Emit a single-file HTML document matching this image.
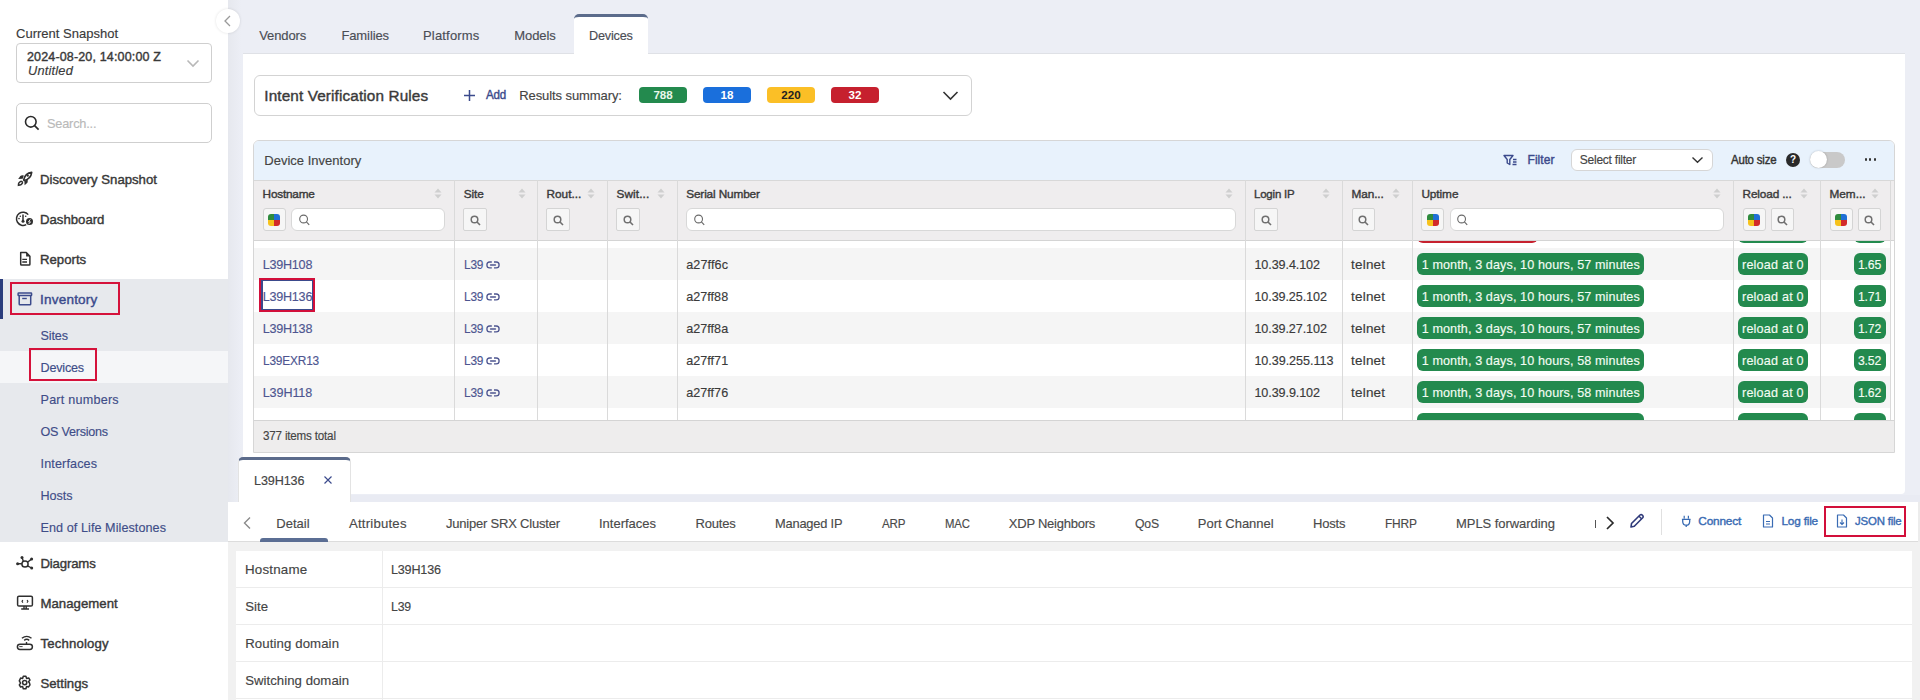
<!DOCTYPE html>
<html><head><meta charset="utf-8"><style>
html,body{margin:0;padding:0;width:1920px;height:700px;overflow:hidden;background:#fff}
body{position:relative;font-family:"Liberation Sans",sans-serif}
body>div,body>span,body>svg{position:absolute}
.t{white-space:nowrap;line-height:1}
</style></head><body>
<div style="left:0.00px;top:0.00px;width:228.00px;height:700.00px;background:#fff"></div>
<span class="t" style="left:16.00px;top:26.60px;font-size:13px;color:#3a3a3a;letter-spacing:0.007px;-webkit-text-stroke:0.15px #3a3a3a;">Current Snapshot</span>
<div style="left:16.00px;top:43.00px;width:196.00px;height:40.00px;border:1px solid #cfcfcf;border-radius:4px;box-sizing:border-box;background:#fff"></div>
<span class="t" style="left:27.00px;top:51.22px;font-size:12.5px;color:#393939;letter-spacing:0.152px;-webkit-text-stroke:0.4px #393939;">2024-08-20, 14:00:00 Z</span>
<span class="t" style="left:27.50px;top:65.22px;font-size:12.5px;color:#3a3a3a;font-style:italic;letter-spacing:0.200px;-webkit-text-stroke:0.15px #3a3a3a;transform:scaleX(1.0231);transform-origin:0 0;">Untitled</span>
<svg style="left:186px;top:59px;" width="14" height="9" viewBox="0 0 14 9"><path d="M1.5 1.5 L7 7 L12.5 1.5" fill="none" stroke="#b8b8b8" stroke-width="1.6"/></svg>
<div style="left:16.00px;top:103.00px;width:196.00px;height:40.00px;border:1px solid #cfcfcf;border-radius:5px;box-sizing:border-box;background:#fff"></div>
<svg style="left:24px;top:115px;" width="16" height="16" viewBox="0 0 16 16"><circle cx="6.8" cy="6.8" r="5.3" fill="none" stroke="#2a2a2a" stroke-width="1.6"/><path d="M10.6 10.6 L14.6 14.6" stroke="#2a2a2a" stroke-width="1.7"/></svg>
<span class="t" style="left:47.40px;top:116.50px;font-size:13px;color:#b9b9b9;letter-spacing:-0.200px;-webkit-text-stroke:0.15px #b9b9b9;transform:scaleX(0.9816);transform-origin:0 0;">Search...</span>
<svg style="left:14px;top:168px;" width="24" height="24" viewBox="0 0 24 24"><path d="M9.6 11.9 C10.6 7.6 13.6 4.9 17.7 4.4 C17.2 8.5 14.5 11.5 10.3 12.6 Z" fill="none" stroke="#2f2f2f" stroke-width="1.6" stroke-linejoin="round"/><circle cx="13.8" cy="7.7" r="1.1" fill="#2f2f2f"/><path d="M4.2 10.9 L6.3 7.9 Q7.6 7.1 9.9 7.5 L8.7 10.7 Z" fill="#2f2f2f"/><path d="M10.4 12.7 L13.7 11.4 Q14 13.3 13.4 14.7 L10.6 17.3 Z" fill="#2f2f2f"/><path d="M4.4 17.4 Q4.2 14.1 6.8 13.3 Q8.7 13.5 8.5 15.1 Q7.7 17.2 4.4 17.4 Z" fill="none" stroke="#2f2f2f" stroke-width="1.4"/></svg>
<svg style="left:14px;top:208px;" width="24" height="24" viewBox="0 0 24 24"><path d="M14.2 6.6 A6.6 6.6 0 1 0 12.2 16.6" fill="none" stroke="#2f2f2f" stroke-width="1.5"/><path d="M9 6.6 V12.8" stroke="#2f2f2f" stroke-width="1.5"/><circle cx="9" cy="13.3" r="1.5" fill="#2f2f2f"/><circle cx="6.3" cy="8.2" r="0.8" fill="#2f2f2f"/><circle cx="11.7" cy="8.2" r="0.8" fill="#2f2f2f"/><circle cx="5" cy="10.6" r="0.8" fill="#2f2f2f"/><circle cx="15.5" cy="13.6" r="3.5" fill="#2f2f2f"/><path d="M16.3 11.4 L14.5 13.9 H16.5 L14.7 16" fill="none" stroke="#fff" stroke-width="0.9"/></svg>
<svg style="left:14px;top:248px;" width="24" height="24" viewBox="0 0 24 24"><path d="M6.7 4.6 H12.3 L15.9 8.2 V16.3 Q15.9 17.1 15.1 17.1 H7.5 Q6.7 17.1 6.7 16.3 Z" fill="none" stroke="#2f2f2f" stroke-width="1.5" stroke-linejoin="round"/><path d="M12.1 4.6 V8.4 H15.9 Z" fill="#2f2f2f"/><path d="M8.3 11.4 H13 M8.3 14 H13" stroke="#2f2f2f" stroke-width="1.3"/></svg>
<span class="t" style="left:40.00px;top:172.83px;font-size:13.2px;color:#383838;letter-spacing:-0.022px;-webkit-text-stroke:0.4px #383838;">Discovery Snapshot</span>
<span class="t" style="left:40.00px;top:212.83px;font-size:13.2px;color:#383838;letter-spacing:-0.009px;-webkit-text-stroke:0.4px #383838;">Dashboard</span>
<span class="t" style="left:40.00px;top:252.83px;font-size:13.2px;color:#383838;letter-spacing:-0.003px;-webkit-text-stroke:0.4px #383838;">Reports</span>
<div style="left:0.00px;top:279.00px;width:228.00px;height:263.00px;background:#e7e9ed"></div>
<div style="left:0.00px;top:279.00px;width:3.00px;height:39.50px;background:#2b3d7d"></div>
<svg style="left:14px;top:288px;" width="24" height="24" viewBox="0 0 24 24"><rect x="4.1" y="5.1" width="13.5" height="2.4" rx="0.6" fill="none" stroke="#3b4a8c" stroke-width="1.5"/><path d="M5.2 7.5 V15.9 Q5.2 16.7 6 16.7 H15.9 Q16.7 16.7 16.7 15.9 V7.5" fill="none" stroke="#3b4a8c" stroke-width="1.5"/><path d="M8.2 10.5 H12.8" stroke="#3b4a8c" stroke-width="1.4"/></svg>
<span class="t" style="left:40.00px;top:292.83px;font-size:13.2px;color:#3b4a8c;letter-spacing:0.200px;-webkit-text-stroke:0.4px #3b4a8c;transform:scaleX(1.0268);transform-origin:0 0;">Inventory</span>
<div style="left:9.60px;top:282.30px;width:110.90px;height:33.20px;border:2px solid #d5123b;box-sizing:border-box"></div>
<div style="left:0.00px;top:351.00px;width:228.00px;height:31.50px;background:#f5f6f8"></div>
<span class="t" style="left:40.50px;top:329.93px;font-size:12.6px;color:#3f4d88;letter-spacing:-0.122px;-webkit-text-stroke:0.15px #3f4d88;">Sites</span>
<span class="t" style="left:40.50px;top:361.93px;font-size:12.6px;color:#3f4d88;letter-spacing:-0.202px;-webkit-text-stroke:0.15px #3f4d88;">Devices</span>
<span class="t" style="left:40.50px;top:393.93px;font-size:12.6px;color:#3f4d88;letter-spacing:0.231px;-webkit-text-stroke:0.15px #3f4d88;">Part numbers</span>
<span class="t" style="left:40.50px;top:425.93px;font-size:12.6px;color:#3f4d88;letter-spacing:-0.239px;-webkit-text-stroke:0.15px #3f4d88;">OS Versions</span>
<span class="t" style="left:40.50px;top:457.93px;font-size:12.6px;color:#3f4d88;letter-spacing:0.137px;-webkit-text-stroke:0.15px #3f4d88;">Interfaces</span>
<span class="t" style="left:40.50px;top:489.93px;font-size:12.6px;color:#3f4d88;letter-spacing:-0.022px;-webkit-text-stroke:0.15px #3f4d88;">Hosts</span>
<span class="t" style="left:40.50px;top:521.93px;font-size:12.6px;color:#3f4d88;letter-spacing:0.074px;-webkit-text-stroke:0.15px #3f4d88;">End of Life Milestones</span>
<div style="left:29.40px;top:348.40px;width:68.00px;height:33.00px;border:2px solid #d5123b;box-sizing:border-box"></div>
<svg style="left:12px;top:552px;" width="24" height="24" viewBox="0 0 24 24"><circle cx="13" cy="12" r="3.1" fill="none" stroke="#2f2f2f" stroke-width="1.5"/><path d="M5.5 11.8 H9.9 M10 5.3 L11.3 9.3 M19.5 7.1 L15.5 10.3 M19.6 16 L15.5 13.8" stroke="#2f2f2f" stroke-width="1.4"/><circle cx="5.6" cy="11.8" r="1.5" fill="#2f2f2f"/><circle cx="10" cy="5.4" r="1.5" fill="#2f2f2f"/><circle cx="19.6" cy="7.1" r="1.5" fill="#2f2f2f"/><circle cx="19.7" cy="16" r="1.5" fill="#2f2f2f"/></svg>
<svg style="left:12px;top:592px;" width="24" height="24" viewBox="0 0 24 24"><rect x="5.6" y="4.2" width="14.8" height="9.9" rx="1.4" fill="none" stroke="#2f2f2f" stroke-width="1.5"/><path d="M12 14.1 V16.6 M14.2 14.1 V16.6 M9.2 17 H17" stroke="#2f2f2f" stroke-width="1.4"/><path d="M10.9 8 L10 9.3 L10.9 10.6 M15 8 L15.9 9.3 L15 10.6" fill="none" stroke="#2f2f2f" stroke-width="1.1"/></svg>
<svg style="left:12px;top:632px;" width="24" height="24" viewBox="0 0 24 24"><rect x="5.4" y="12.2" width="15" height="5.2" rx="2.6" fill="none" stroke="#2f2f2f" stroke-width="1.5"/><path d="M7.3 14.6 H10.6" stroke="#2f2f2f" stroke-width="0.9"/><path d="M14.5 10 V12.2" stroke="#2f2f2f" stroke-width="1.4"/><path d="M9.9 6.3 Q14.7 2.5 19.5 6.3 M12.2 8.4 Q14.7 6.3 17.2 8.4" fill="none" stroke="#2f2f2f" stroke-width="1.4"/></svg>
<svg style="left:12px;top:672px;" width="24" height="24" viewBox="0 0 24 24"><path d="M11.3 4.3 H13.9 L14.6 6.4 L16.7 5.9 L18 8.1 L16.5 9.7 L17.4 10.8 L18 12.9 L16.6 14.9 L14.6 14.6 L13.9 16.8 H11.3 L10.6 14.6 L8.6 15 L7.3 12.9 L8.6 11.1 L7.3 8.8 L8.6 6.1 L10.6 6.4 Z" fill="none" stroke="#2f2f2f" stroke-width="1.5" stroke-linejoin="round"/><circle cx="12.7" cy="10.6" r="2.1" fill="none" stroke="#2f2f2f" stroke-width="1.5"/></svg>
<span class="t" style="left:40.40px;top:556.83px;font-size:13.2px;color:#383838;letter-spacing:-0.148px;-webkit-text-stroke:0.4px #383838;">Diagrams</span>
<span class="t" style="left:40.40px;top:596.83px;font-size:13.2px;color:#383838;letter-spacing:0.045px;-webkit-text-stroke:0.4px #383838;">Management</span>
<span class="t" style="left:40.40px;top:636.83px;font-size:13.2px;color:#383838;letter-spacing:0.172px;-webkit-text-stroke:0.4px #383838;">Technology</span>
<span class="t" style="left:40.40px;top:676.83px;font-size:13.2px;color:#383838;letter-spacing:0.013px;-webkit-text-stroke:0.4px #383838;">Settings</span>
<div style="left:228.00px;top:0.00px;width:1692.00px;height:700.00px;background:#eceef5"></div>
<div style="left:228.00px;top:0.00px;width:13.00px;height:700.00px;background:linear-gradient(90deg,#e6e8ee,#eceef5)"></div>
<div style="left:215.5px;top:8.5px;width:24px;height:24px;border-radius:50%;background:#fff;box-shadow:0 0 3px rgba(0,0,0,0.12)"></div>
<svg style="left:222px;top:14px;" width="12" height="14" viewBox="0 0 12 14"><path d="M8 2 L3 7 L8 12" fill="none" stroke="#9a9a9a" stroke-width="1.3"/></svg>
<div style="left:243.00px;top:53.00px;width:1662.00px;height:441.00px;background:#fff;border-top:1px solid #dfe1e6;box-sizing:border-box;border-radius:0 0 4px 4px"></div>
<div style="left:574.00px;top:14.00px;width:74.00px;height:40.50px;background:#fff;border-top:3px solid #5b6b8b;border-radius:5px 5px 0 0;box-sizing:border-box"></div>
<span class="t" style="left:259.20px;top:29.00px;font-size:13px;color:#4a4d55;letter-spacing:-0.101px;-webkit-text-stroke:0.15px #4a4d55;">Vendors</span>
<span class="t" style="left:341.40px;top:29.00px;font-size:13px;color:#4a4d55;letter-spacing:-0.100px;-webkit-text-stroke:0.15px #4a4d55;">Families</span>
<span class="t" style="left:423.00px;top:29.00px;font-size:13px;color:#4a4d55;letter-spacing:0.177px;-webkit-text-stroke:0.15px #4a4d55;">Platforms</span>
<span class="t" style="left:514.30px;top:29.00px;font-size:13px;color:#4a4d55;letter-spacing:-0.101px;-webkit-text-stroke:0.15px #4a4d55;">Models</span>
<span class="t" style="left:589.30px;top:29.00px;font-size:13px;color:#4a4d55;letter-spacing:-0.200px;-webkit-text-stroke:0.15px #4a4d55;transform:scaleX(0.9746);transform-origin:0 0;">Devices</span>
<div style="left:253.50px;top:74.50px;width:718.00px;height:41.00px;border:1px solid #d3d3d3;border-radius:6px;box-sizing:border-box"></div>
<span class="t" style="left:264.30px;top:87.65px;font-size:15.3px;color:#3a3a3a;letter-spacing:0.130px;-webkit-text-stroke:0.4px #3a3a3a;">Intent Verification Rules</span>
<svg style="left:463px;top:89px;" width="13" height="13" viewBox="0 0 13 13"><path d="M6.5 1 V12 M1 6.5 H12" stroke="#3b4a8c" stroke-width="1.5"/></svg>
<span class="t" style="left:486.30px;top:88.64px;font-size:12px;color:#3b4a8c;letter-spacing:-0.200px;-webkit-text-stroke:0.4px #3b4a8c;transform:scaleX(0.9637);transform-origin:0 0;">Add</span>
<span class="t" style="left:519.20px;top:88.80px;font-size:13px;color:#444;letter-spacing:-0.083px;-webkit-text-stroke:0.15px #444;">Results summary:</span>
<div style="left:639.2px;top:87.2px;width:47.799999999999955px;height:15.6px;background:#238a4e;border-radius:4px;color:#e9f7ea;font-size:11.6px;font-weight:bold;text-align:center;line-height:16.6px">788</div>
<div style="left:703px;top:87.2px;width:48px;height:15.6px;background:#1a6fdc;border-radius:4px;color:#fff;font-size:11.6px;font-weight:bold;text-align:center;line-height:16.6px">18</div>
<div style="left:767px;top:87.2px;width:48px;height:15.6px;background:#fbbf26;border-radius:4px;color:#222;font-size:11.6px;font-weight:bold;text-align:center;line-height:16.6px">220</div>
<div style="left:831px;top:87.2px;width:48px;height:15.6px;background:#c6202e;border-radius:4px;color:#fff;font-size:11.6px;font-weight:bold;text-align:center;line-height:16.6px">32</div>
<svg style="left:942px;top:90px;" width="17" height="11" viewBox="0 0 17 11"><path d="M1.5 2 L8.5 9 L15.5 2" fill="none" stroke="#333" stroke-width="1.6"/></svg>
<div style="left:253.00px;top:140.00px;width:1642.00px;height:312.50px;border:1px solid #d6d6d6;border-radius:6px 6px 0 0;box-sizing:border-box;background:#fff"></div>
<div style="left:254.00px;top:141.00px;width:1640.00px;height:38.50px;background:#e8f2fc;border-radius:5px 5px 0 0"></div>
<span class="t" style="left:264.30px;top:154.20px;font-size:13px;color:#444;letter-spacing:0.011px;-webkit-text-stroke:0.15px #444;">Device Inventory</span>
<svg style="left:1503px;top:154px;" width="15" height="12" viewBox="0 0 15 12"><path d="M1 1.5 H10 L6.8 5.5 V10.5 L4.2 9 V5.5 Z" fill="none" stroke="#3b4a8c" stroke-width="1.4" stroke-linejoin="round"/><path d="M10 5.5 H13.5 M10 8 H13.5 M9.5 10.5 H13.5" stroke="#3b4a8c" stroke-width="1.3"/></svg>
<span class="t" style="left:1527.50px;top:153.59px;font-size:12px;color:#3b4a8c;letter-spacing:0.055px;-webkit-text-stroke:0.4px #3b4a8c;">Filter</span>
<div style="left:1570.60px;top:148.50px;width:142.40px;height:22.80px;background:#fff;border:1px solid #d6d6d6;border-radius:6px;box-sizing:border-box"></div>
<span class="t" style="left:1579.75px;top:153.84px;font-size:12px;color:#444;letter-spacing:-0.235px;-webkit-text-stroke:0.15px #444;">Select filter</span>
<svg style="left:1691px;top:156px;" width="13" height="8" viewBox="0 0 13 8"><path d="M1.5 1.5 L6.5 6.2 L11.5 1.5" fill="none" stroke="#333" stroke-width="1.4"/></svg>
<span class="t" style="left:1730.60px;top:153.84px;font-size:12px;color:#333;letter-spacing:-0.200px;-webkit-text-stroke:0.4px #333;transform:scaleX(0.9546);transform-origin:0 0;">Auto size</span>
<div style="left:1786px;top:153px;width:14px;height:14px;border-radius:50%;background:#2a2a2a;color:#fff;font-size:10px;font-weight:bold;text-align:center;line-height:14px">?</div>
<div style="left:1810.30px;top:151.50px;width:35.20px;height:16.80px;background:#c9c9c9;border-radius:9px"></div>
<div style="left:1810.3px;top:151.3px;width:17px;height:17px;border-radius:50%;background:#fff;box-shadow:0 0 2px rgba(0,0,0,0.25)"></div>
<div style="left:1864.5px;top:158.4px;width:2.2px;height:2.2px;border-radius:50%;background:#333"></div>
<div style="left:1869px;top:158.4px;width:2.2px;height:2.2px;border-radius:50%;background:#333"></div>
<div style="left:1873.5px;top:158.4px;width:2.2px;height:2.2px;border-radius:50%;background:#333"></div>
<div style="left:254.00px;top:248.00px;width:1636.50px;height:32.00px;background:#f5f5f5"></div>
<div style="left:254.00px;top:312.00px;width:1636.50px;height:32.00px;background:#f5f5f5"></div>
<div style="left:254.00px;top:376.00px;width:1636.50px;height:32.00px;background:#f5f5f5"></div>
<div style="left:1417.00px;top:221.00px;width:120.50px;height:22.00px;background:#c6202e;border-radius:6px"></div>
<div style="left:1738.00px;top:221.00px;width:70.00px;height:22.00px;background:#238a4e;border-radius:6px"></div>
<div style="left:1854.20px;top:221.00px;width:31.80px;height:22.00px;background:#238a4e;border-radius:6px"></div>
<div style="left:1417.00px;top:413.00px;width:227.30px;height:22.00px;background:#238a4e;border-radius:6px"></div>
<div style="left:1738.00px;top:413.00px;width:70.00px;height:22.00px;background:#238a4e;border-radius:6px"></div>
<div style="left:1854.20px;top:413.00px;width:31.80px;height:22.00px;background:#238a4e;border-radius:6px"></div>
<div style="left:254.00px;top:419.50px;width:1640.00px;height:32.00px;background:#eeeded;border-top:1px solid #d4d4d4;box-sizing:border-box"></div>
<span class="t" style="left:262.50px;top:429.92px;font-size:12.5px;color:#444;letter-spacing:-0.200px;-webkit-text-stroke:0.15px #444;transform:scaleX(0.9298);transform-origin:0 0;">377 items total</span>
<div style="left:254.00px;top:179.50px;width:1640.00px;height:61.00px;background:#efedee;border-top:1px solid #d8d8d8;border-bottom:1px solid #d4d4d4;box-sizing:border-box"></div>
<div style="left:454.00px;top:179.50px;width:1.00px;height:240.00px;background:#dadada"></div>
<div style="left:537.00px;top:179.50px;width:1.00px;height:240.00px;background:#dadada"></div>
<div style="left:607.00px;top:179.50px;width:1.00px;height:240.00px;background:#dadada"></div>
<div style="left:677.00px;top:179.50px;width:1.00px;height:240.00px;background:#dadada"></div>
<div style="left:1245.00px;top:179.50px;width:1.00px;height:240.00px;background:#dadada"></div>
<div style="left:1342.00px;top:179.50px;width:1.00px;height:240.00px;background:#dadada"></div>
<div style="left:1412.00px;top:179.50px;width:1.00px;height:240.00px;background:#dadada"></div>
<div style="left:1733.00px;top:179.50px;width:1.00px;height:240.00px;background:#dadada"></div>
<div style="left:1820.00px;top:179.50px;width:1.00px;height:240.00px;background:#dadada"></div>
<div style="left:1890.00px;top:179.50px;width:1.00px;height:240.00px;background:#dadada"></div>
<span class="t" style="left:262.60px;top:188.81px;font-size:11.8px;color:#3a3a3a;letter-spacing:-0.223px;-webkit-text-stroke:0.4px #3a3a3a;">Hostname</span>
<svg style="left:434px;top:188px;" width="8" height="11" viewBox="0 0 8 11"><path d="M4 0.5 L7.5 4.5 H0.5 Z M4 10.5 L7.5 6.5 H0.5 Z" fill="#cfcfcf"/></svg>
<span class="t" style="left:463.70px;top:188.81px;font-size:11.8px;color:#3a3a3a;letter-spacing:-0.083px;-webkit-text-stroke:0.4px #3a3a3a;">Site</span>
<svg style="left:517.5px;top:188px;" width="8" height="11" viewBox="0 0 8 11"><path d="M4 0.5 L7.5 4.5 H0.5 Z M4 10.5 L7.5 6.5 H0.5 Z" fill="#cfcfcf"/></svg>
<span class="t" style="left:546.40px;top:188.81px;font-size:11.8px;color:#3a3a3a;letter-spacing:0.034px;-webkit-text-stroke:0.4px #3a3a3a;">Rout...</span>
<svg style="left:587px;top:188px;" width="8" height="11" viewBox="0 0 8 11"><path d="M4 0.5 L7.5 4.5 H0.5 Z M4 10.5 L7.5 6.5 H0.5 Z" fill="#cfcfcf"/></svg>
<span class="t" style="left:616.40px;top:188.81px;font-size:11.8px;color:#3a3a3a;letter-spacing:0.125px;-webkit-text-stroke:0.4px #3a3a3a;">Swit...</span>
<svg style="left:656.5px;top:188px;" width="8" height="11" viewBox="0 0 8 11"><path d="M4 0.5 L7.5 4.5 H0.5 Z M4 10.5 L7.5 6.5 H0.5 Z" fill="#cfcfcf"/></svg>
<span class="t" style="left:686.20px;top:188.81px;font-size:11.8px;color:#3a3a3a;letter-spacing:-0.140px;-webkit-text-stroke:0.4px #3a3a3a;">Serial Number</span>
<svg style="left:1225px;top:188px;" width="8" height="11" viewBox="0 0 8 11"><path d="M4 0.5 L7.5 4.5 H0.5 Z M4 10.5 L7.5 6.5 H0.5 Z" fill="#cfcfcf"/></svg>
<span class="t" style="left:1254.40px;top:188.81px;font-size:11.8px;color:#3a3a3a;letter-spacing:-0.200px;-webkit-text-stroke:0.4px #3a3a3a;transform:scaleX(0.9712);transform-origin:0 0;">Login IP</span>
<svg style="left:1322px;top:188px;" width="8" height="11" viewBox="0 0 8 11"><path d="M4 0.5 L7.5 4.5 H0.5 Z M4 10.5 L7.5 6.5 H0.5 Z" fill="#cfcfcf"/></svg>
<span class="t" style="left:1351.60px;top:188.81px;font-size:11.8px;color:#3a3a3a;letter-spacing:-0.132px;-webkit-text-stroke:0.4px #3a3a3a;">Man...</span>
<svg style="left:1392.3px;top:188px;" width="8" height="11" viewBox="0 0 8 11"><path d="M4 0.5 L7.5 4.5 H0.5 Z M4 10.5 L7.5 6.5 H0.5 Z" fill="#cfcfcf"/></svg>
<span class="t" style="left:1421.40px;top:188.81px;font-size:11.8px;color:#3a3a3a;letter-spacing:-0.063px;-webkit-text-stroke:0.4px #3a3a3a;">Uptime</span>
<svg style="left:1712.5px;top:188px;" width="8" height="11" viewBox="0 0 8 11"><path d="M4 0.5 L7.5 4.5 H0.5 Z M4 10.5 L7.5 6.5 H0.5 Z" fill="#cfcfcf"/></svg>
<span class="t" style="left:1742.60px;top:188.81px;font-size:11.8px;color:#3a3a3a;letter-spacing:-0.151px;-webkit-text-stroke:0.4px #3a3a3a;">Reload ...</span>
<svg style="left:1800px;top:188px;" width="8" height="11" viewBox="0 0 8 11"><path d="M4 0.5 L7.5 4.5 H0.5 Z M4 10.5 L7.5 6.5 H0.5 Z" fill="#cfcfcf"/></svg>
<span class="t" style="left:1829.50px;top:188.81px;font-size:11.8px;color:#3a3a3a;letter-spacing:-0.010px;-webkit-text-stroke:0.4px #3a3a3a;">Mem...</span>
<svg style="left:1870.5px;top:188px;" width="8" height="11" viewBox="0 0 8 11"><path d="M4 0.5 L7.5 4.5 H0.5 Z M4 10.5 L7.5 6.5 H0.5 Z" fill="#cfcfcf"/></svg>
<div style="left:262.6px;top:208.3px;width:23px;height:23.2px;background:#f6f6f6;border:1px solid #d4d4d4;border-radius:3px;box-sizing:border-box"></div>
<svg style="left:267.90000000000003px;top:213.8px;" width="12" height="12" viewBox="0 0 12 12"><path d="M0 3 Q0 0 3 0 H6 V6 H0 Z" fill="#2e8b3d"/><path d="M6 0 H9 Q12 0 12 3 V6 H6 Z" fill="#1f6fd6"/><path d="M0 6 H6 V12 H3 Q0 12 0 9 Z" fill="#f6c21c"/><path d="M6 6 H12 V9 Q12 12 9 12 H6 Z" fill="#d22a2a"/></svg>
<div style="left:291px;top:208.3px;width:153.8px;height:23.2px;background:#fff;border:1px solid #d8d8d8;border-radius:6px;box-sizing:border-box"></div>
<svg style="left:298.5px;top:213.8px;" width="12" height="12" viewBox="0 0 12 12"><circle cx="4.6" cy="5" r="3.9" fill="none" stroke="#6a6a6a" stroke-width="1.1"/><path d="M7.4 7.9 L10.2 10.8" stroke="#6a6a6a" stroke-width="1.2"/></svg>
<div style="left:463.3px;top:208.3px;width:23.3px;height:23.2px;background:#f6f6f6;border:1px solid #d4d4d4;border-radius:2px;box-sizing:border-box"></div>
<svg style="left:469.8px;top:214.5px;" width="11" height="11" viewBox="0 0 11 11"><circle cx="4.5" cy="4.5" r="3.3" fill="none" stroke="#707070" stroke-width="1.5"/><path d="M7 7 L10 10" stroke="#707070" stroke-width="1.6"/></svg>
<div style="left:546.4px;top:208.3px;width:23.3px;height:23.2px;background:#f6f6f6;border:1px solid #d4d4d4;border-radius:2px;box-sizing:border-box"></div>
<svg style="left:552.9px;top:214.5px;" width="11" height="11" viewBox="0 0 11 11"><circle cx="4.5" cy="4.5" r="3.3" fill="none" stroke="#707070" stroke-width="1.5"/><path d="M7 7 L10 10" stroke="#707070" stroke-width="1.6"/></svg>
<div style="left:616.4px;top:208.3px;width:23.3px;height:23.2px;background:#f6f6f6;border:1px solid #d4d4d4;border-radius:2px;box-sizing:border-box"></div>
<svg style="left:622.9px;top:214.5px;" width="11" height="11" viewBox="0 0 11 11"><circle cx="4.5" cy="4.5" r="3.3" fill="none" stroke="#707070" stroke-width="1.5"/><path d="M7 7 L10 10" stroke="#707070" stroke-width="1.6"/></svg>
<div style="left:686.2px;top:208.3px;width:550.0999999999999px;height:23.2px;background:#fff;border:1px solid #d8d8d8;border-radius:6px;box-sizing:border-box"></div>
<svg style="left:693.7px;top:213.8px;" width="12" height="12" viewBox="0 0 12 12"><circle cx="4.6" cy="5" r="3.9" fill="none" stroke="#6a6a6a" stroke-width="1.1"/><path d="M7.4 7.9 L10.2 10.8" stroke="#6a6a6a" stroke-width="1.2"/></svg>
<div style="left:1254.4px;top:208.3px;width:23.3px;height:23.2px;background:#f6f6f6;border:1px solid #d4d4d4;border-radius:2px;box-sizing:border-box"></div>
<svg style="left:1260.9px;top:214.5px;" width="11" height="11" viewBox="0 0 11 11"><circle cx="4.5" cy="4.5" r="3.3" fill="none" stroke="#707070" stroke-width="1.5"/><path d="M7 7 L10 10" stroke="#707070" stroke-width="1.6"/></svg>
<div style="left:1351.6px;top:208.3px;width:23.3px;height:23.2px;background:#f6f6f6;border:1px solid #d4d4d4;border-radius:2px;box-sizing:border-box"></div>
<svg style="left:1358.1px;top:214.5px;" width="11" height="11" viewBox="0 0 11 11"><circle cx="4.5" cy="4.5" r="3.3" fill="none" stroke="#707070" stroke-width="1.5"/><path d="M7 7 L10 10" stroke="#707070" stroke-width="1.6"/></svg>
<div style="left:1421.4px;top:208.3px;width:23px;height:23.2px;background:#f6f6f6;border:1px solid #d4d4d4;border-radius:3px;box-sizing:border-box"></div>
<svg style="left:1426.7px;top:213.8px;" width="12" height="12" viewBox="0 0 12 12"><path d="M0 3 Q0 0 3 0 H6 V6 H0 Z" fill="#2e8b3d"/><path d="M6 0 H9 Q12 0 12 3 V6 H6 Z" fill="#1f6fd6"/><path d="M0 6 H6 V12 H3 Q0 12 0 9 Z" fill="#f6c21c"/><path d="M6 6 H12 V9 Q12 12 9 12 H6 Z" fill="#d22a2a"/></svg>
<div style="left:1449.8px;top:208.3px;width:274.20000000000005px;height:23.2px;background:#fff;border:1px solid #d8d8d8;border-radius:6px;box-sizing:border-box"></div>
<svg style="left:1457.3px;top:213.8px;" width="12" height="12" viewBox="0 0 12 12"><circle cx="4.6" cy="5" r="3.9" fill="none" stroke="#6a6a6a" stroke-width="1.1"/><path d="M7.4 7.9 L10.2 10.8" stroke="#6a6a6a" stroke-width="1.2"/></svg>
<div style="left:1742.6px;top:208.3px;width:23px;height:23.2px;background:#f6f6f6;border:1px solid #d4d4d4;border-radius:3px;box-sizing:border-box"></div>
<svg style="left:1747.8999999999999px;top:213.8px;" width="12" height="12" viewBox="0 0 12 12"><path d="M0 3 Q0 0 3 0 H6 V6 H0 Z" fill="#2e8b3d"/><path d="M6 0 H9 Q12 0 12 3 V6 H6 Z" fill="#1f6fd6"/><path d="M0 6 H6 V12 H3 Q0 12 0 9 Z" fill="#f6c21c"/><path d="M6 6 H12 V9 Q12 12 9 12 H6 Z" fill="#d22a2a"/></svg>
<div style="left:1770.5px;top:208.3px;width:23.3px;height:23.2px;background:#f6f6f6;border:1px solid #d4d4d4;border-radius:2px;box-sizing:border-box"></div>
<svg style="left:1777.0px;top:214.5px;" width="11" height="11" viewBox="0 0 11 11"><circle cx="4.5" cy="4.5" r="3.3" fill="none" stroke="#707070" stroke-width="1.5"/><path d="M7 7 L10 10" stroke="#707070" stroke-width="1.6"/></svg>
<div style="left:1829.5px;top:208.3px;width:23px;height:23.2px;background:#f6f6f6;border:1px solid #d4d4d4;border-radius:3px;box-sizing:border-box"></div>
<svg style="left:1834.8px;top:213.8px;" width="12" height="12" viewBox="0 0 12 12"><path d="M0 3 Q0 0 3 0 H6 V6 H0 Z" fill="#2e8b3d"/><path d="M6 0 H9 Q12 0 12 3 V6 H6 Z" fill="#1f6fd6"/><path d="M0 6 H6 V12 H3 Q0 12 0 9 Z" fill="#f6c21c"/><path d="M6 6 H12 V9 Q12 12 9 12 H6 Z" fill="#d22a2a"/></svg>
<div style="left:1857.6px;top:208.3px;width:23.3px;height:23.2px;background:#f6f6f6;border:1px solid #d4d4d4;border-radius:2px;box-sizing:border-box"></div>
<svg style="left:1864.1px;top:214.5px;" width="11" height="11" viewBox="0 0 11 11"><circle cx="4.5" cy="4.5" r="3.3" fill="none" stroke="#707070" stroke-width="1.5"/><path d="M7 7 L10 10" stroke="#707070" stroke-width="1.6"/></svg>
<span class="t" style="left:262.70px;top:258.93px;font-size:12.6px;color:#4d5590;letter-spacing:-0.235px;-webkit-text-stroke:0.15px #4d5590;">L39H108</span>
<span class="t" style="left:463.50px;top:258.93px;font-size:12.6px;color:#4d5590;letter-spacing:-0.200px;-webkit-text-stroke:0.15px #4d5590;transform:scaleX(0.9450);transform-origin:0 0;">L39</span>
<svg style="left:486px;top:259px;" width="14" height="10" viewBox="0 0 14 10"><path d="M5.8 3 H3.6 Q0.9 3 0.9 5.9 Q0.9 8.8 3.6 8.8 H5.8 M8 3 H10.2 Q13.1 3 13.1 5.9 Q13.1 8.8 10.2 8.8 H8" fill="none" stroke="#4d5590" stroke-width="1.3"/><path d="M4.6 5.9 H9.4" stroke="#4d5590" stroke-width="1.5" stroke-linecap="round"/></svg>
<span class="t" style="left:686.20px;top:258.93px;font-size:12.6px;color:#3a3a3a;letter-spacing:0.128px;-webkit-text-stroke:0.15px #3a3a3a;">a27ff6c</span>
<span class="t" style="left:1254.40px;top:258.93px;font-size:12.6px;color:#3a3a3a;letter-spacing:-0.088px;-webkit-text-stroke:0.15px #3a3a3a;">10.39.4.102</span>
<span class="t" style="left:1351.20px;top:258.93px;font-size:12.6px;color:#3a3a3a;letter-spacing:0.200px;-webkit-text-stroke:0.15px #3a3a3a;transform:scaleX(1.0711);transform-origin:0 0;">telnet</span>
<div style="left:1417.00px;top:253.00px;width:227.30px;height:22.00px;background:#238a4e;border-radius:6px"></div>
<span class="t" style="left:1421.70px;top:258.93px;font-size:12.6px;color:#f3fcf3;letter-spacing:0.107px;-webkit-text-stroke:0.15px #f3fcf3;">1 month, 3 days, 10 hours, 57 minutes</span>
<div style="left:1738.00px;top:253.00px;width:70.00px;height:22.00px;background:#238a4e;border-radius:6px"></div>
<span class="t" style="left:1742.00px;top:258.93px;font-size:12.6px;color:#f3fcf3;letter-spacing:0.205px;-webkit-text-stroke:0.15px #f3fcf3;">reload at 0</span>
<div style="left:1854.20px;top:253.00px;width:31.80px;height:22.00px;background:#238a4e;border-radius:6px"></div>
<span class="t" style="left:1858.40px;top:258.93px;font-size:12.6px;color:#f3fcf3;letter-spacing:-0.200px;-webkit-text-stroke:0.15px #f3fcf3;transform:scaleX(0.9695);transform-origin:0 0;">1.65</span>
<span class="t" style="left:262.70px;top:290.93px;font-size:12.6px;color:#4d5590;letter-spacing:-0.235px;-webkit-text-stroke:0.15px #4d5590;">L39H136</span>
<span class="t" style="left:463.50px;top:290.93px;font-size:12.6px;color:#4d5590;letter-spacing:-0.200px;-webkit-text-stroke:0.15px #4d5590;transform:scaleX(0.9450);transform-origin:0 0;">L39</span>
<svg style="left:486px;top:291px;" width="14" height="10" viewBox="0 0 14 10"><path d="M5.8 3 H3.6 Q0.9 3 0.9 5.9 Q0.9 8.8 3.6 8.8 H5.8 M8 3 H10.2 Q13.1 3 13.1 5.9 Q13.1 8.8 10.2 8.8 H8" fill="none" stroke="#4d5590" stroke-width="1.3"/><path d="M4.6 5.9 H9.4" stroke="#4d5590" stroke-width="1.5" stroke-linecap="round"/></svg>
<span class="t" style="left:686.20px;top:290.93px;font-size:12.6px;color:#3a3a3a;letter-spacing:0.027px;-webkit-text-stroke:0.15px #3a3a3a;">a27ff88</span>
<span class="t" style="left:1254.40px;top:290.93px;font-size:12.6px;color:#3a3a3a;letter-spacing:-0.089px;-webkit-text-stroke:0.15px #3a3a3a;">10.39.25.102</span>
<span class="t" style="left:1351.20px;top:290.93px;font-size:12.6px;color:#3a3a3a;letter-spacing:0.200px;-webkit-text-stroke:0.15px #3a3a3a;transform:scaleX(1.0711);transform-origin:0 0;">telnet</span>
<div style="left:1417.00px;top:285.00px;width:227.30px;height:22.00px;background:#238a4e;border-radius:6px"></div>
<span class="t" style="left:1421.70px;top:290.93px;font-size:12.6px;color:#f3fcf3;letter-spacing:0.107px;-webkit-text-stroke:0.15px #f3fcf3;">1 month, 3 days, 10 hours, 57 minutes</span>
<div style="left:1738.00px;top:285.00px;width:70.00px;height:22.00px;background:#238a4e;border-radius:6px"></div>
<span class="t" style="left:1742.00px;top:290.93px;font-size:12.6px;color:#f3fcf3;letter-spacing:0.205px;-webkit-text-stroke:0.15px #f3fcf3;">reload at 0</span>
<div style="left:1854.20px;top:285.00px;width:31.80px;height:22.00px;background:#238a4e;border-radius:6px"></div>
<span class="t" style="left:1858.40px;top:290.93px;font-size:12.6px;color:#f3fcf3;letter-spacing:-0.200px;-webkit-text-stroke:0.15px #f3fcf3;transform:scaleX(0.9695);transform-origin:0 0;">1.71</span>
<span class="t" style="left:262.70px;top:322.93px;font-size:12.6px;color:#4d5590;letter-spacing:-0.235px;-webkit-text-stroke:0.15px #4d5590;">L39H138</span>
<span class="t" style="left:463.50px;top:322.93px;font-size:12.6px;color:#4d5590;letter-spacing:-0.200px;-webkit-text-stroke:0.15px #4d5590;transform:scaleX(0.9450);transform-origin:0 0;">L39</span>
<svg style="left:486px;top:323px;" width="14" height="10" viewBox="0 0 14 10"><path d="M5.8 3 H3.6 Q0.9 3 0.9 5.9 Q0.9 8.8 3.6 8.8 H5.8 M8 3 H10.2 Q13.1 3 13.1 5.9 Q13.1 8.8 10.2 8.8 H8" fill="none" stroke="#4d5590" stroke-width="1.3"/><path d="M4.6 5.9 H9.4" stroke="#4d5590" stroke-width="1.5" stroke-linecap="round"/></svg>
<span class="t" style="left:686.20px;top:322.93px;font-size:12.6px;color:#3a3a3a;letter-spacing:0.027px;-webkit-text-stroke:0.15px #3a3a3a;">a27ff8a</span>
<span class="t" style="left:1254.40px;top:322.93px;font-size:12.6px;color:#3a3a3a;letter-spacing:-0.089px;-webkit-text-stroke:0.15px #3a3a3a;">10.39.27.102</span>
<span class="t" style="left:1351.20px;top:322.93px;font-size:12.6px;color:#3a3a3a;letter-spacing:0.200px;-webkit-text-stroke:0.15px #3a3a3a;transform:scaleX(1.0711);transform-origin:0 0;">telnet</span>
<div style="left:1417.00px;top:317.00px;width:227.30px;height:22.00px;background:#238a4e;border-radius:6px"></div>
<span class="t" style="left:1421.70px;top:322.93px;font-size:12.6px;color:#f3fcf3;letter-spacing:0.107px;-webkit-text-stroke:0.15px #f3fcf3;">1 month, 3 days, 10 hours, 57 minutes</span>
<div style="left:1738.00px;top:317.00px;width:70.00px;height:22.00px;background:#238a4e;border-radius:6px"></div>
<span class="t" style="left:1742.00px;top:322.93px;font-size:12.6px;color:#f3fcf3;letter-spacing:0.205px;-webkit-text-stroke:0.15px #f3fcf3;">reload at 0</span>
<div style="left:1854.20px;top:317.00px;width:31.80px;height:22.00px;background:#238a4e;border-radius:6px"></div>
<span class="t" style="left:1858.40px;top:322.93px;font-size:12.6px;color:#f3fcf3;letter-spacing:-0.200px;-webkit-text-stroke:0.15px #f3fcf3;transform:scaleX(0.9695);transform-origin:0 0;">1.72</span>
<span class="t" style="left:262.70px;top:354.93px;font-size:12.6px;color:#4d5590;letter-spacing:-0.200px;-webkit-text-stroke:0.15px #4d5590;transform:scaleX(0.9436);transform-origin:0 0;">L39EXR13</span>
<span class="t" style="left:463.50px;top:354.93px;font-size:12.6px;color:#4d5590;letter-spacing:-0.200px;-webkit-text-stroke:0.15px #4d5590;transform:scaleX(0.9450);transform-origin:0 0;">L39</span>
<svg style="left:486px;top:355px;" width="14" height="10" viewBox="0 0 14 10"><path d="M5.8 3 H3.6 Q0.9 3 0.9 5.9 Q0.9 8.8 3.6 8.8 H5.8 M8 3 H10.2 Q13.1 3 13.1 5.9 Q13.1 8.8 10.2 8.8 H8" fill="none" stroke="#4d5590" stroke-width="1.3"/><path d="M4.6 5.9 H9.4" stroke="#4d5590" stroke-width="1.5" stroke-linecap="round"/></svg>
<span class="t" style="left:686.20px;top:354.93px;font-size:12.6px;color:#3a3a3a;letter-spacing:0.027px;-webkit-text-stroke:0.15px #3a3a3a;">a27ff71</span>
<span class="t" style="left:1254.40px;top:354.93px;font-size:12.6px;color:#3a3a3a;letter-spacing:-0.050px;-webkit-text-stroke:0.15px #3a3a3a;">10.39.255.113</span>
<span class="t" style="left:1351.20px;top:354.93px;font-size:12.6px;color:#3a3a3a;letter-spacing:0.200px;-webkit-text-stroke:0.15px #3a3a3a;transform:scaleX(1.0711);transform-origin:0 0;">telnet</span>
<div style="left:1417.00px;top:349.00px;width:227.30px;height:22.00px;background:#238a4e;border-radius:6px"></div>
<span class="t" style="left:1421.70px;top:354.93px;font-size:12.6px;color:#f3fcf3;letter-spacing:0.107px;-webkit-text-stroke:0.15px #f3fcf3;">1 month, 3 days, 10 hours, 58 minutes</span>
<div style="left:1738.00px;top:349.00px;width:70.00px;height:22.00px;background:#238a4e;border-radius:6px"></div>
<span class="t" style="left:1742.00px;top:354.93px;font-size:12.6px;color:#f3fcf3;letter-spacing:0.205px;-webkit-text-stroke:0.15px #f3fcf3;">reload at 0</span>
<div style="left:1854.20px;top:349.00px;width:31.80px;height:22.00px;background:#238a4e;border-radius:6px"></div>
<span class="t" style="left:1858.40px;top:354.93px;font-size:12.6px;color:#f3fcf3;letter-spacing:-0.200px;-webkit-text-stroke:0.15px #f3fcf3;transform:scaleX(0.9695);transform-origin:0 0;">3.52</span>
<span class="t" style="left:262.70px;top:386.93px;font-size:12.6px;color:#4d5590;letter-spacing:-0.102px;-webkit-text-stroke:0.15px #4d5590;">L39H118</span>
<span class="t" style="left:463.50px;top:386.93px;font-size:12.6px;color:#4d5590;letter-spacing:-0.200px;-webkit-text-stroke:0.15px #4d5590;transform:scaleX(0.9450);transform-origin:0 0;">L39</span>
<svg style="left:486px;top:387px;" width="14" height="10" viewBox="0 0 14 10"><path d="M5.8 3 H3.6 Q0.9 3 0.9 5.9 Q0.9 8.8 3.6 8.8 H5.8 M8 3 H10.2 Q13.1 3 13.1 5.9 Q13.1 8.8 10.2 8.8 H8" fill="none" stroke="#4d5590" stroke-width="1.3"/><path d="M4.6 5.9 H9.4" stroke="#4d5590" stroke-width="1.5" stroke-linecap="round"/></svg>
<span class="t" style="left:686.20px;top:386.93px;font-size:12.6px;color:#3a3a3a;letter-spacing:0.027px;-webkit-text-stroke:0.15px #3a3a3a;">a27ff76</span>
<span class="t" style="left:1254.40px;top:386.93px;font-size:12.6px;color:#3a3a3a;letter-spacing:-0.088px;-webkit-text-stroke:0.15px #3a3a3a;">10.39.9.102</span>
<span class="t" style="left:1351.20px;top:386.93px;font-size:12.6px;color:#3a3a3a;letter-spacing:0.200px;-webkit-text-stroke:0.15px #3a3a3a;transform:scaleX(1.0711);transform-origin:0 0;">telnet</span>
<div style="left:1417.00px;top:381.00px;width:227.30px;height:22.00px;background:#238a4e;border-radius:6px"></div>
<span class="t" style="left:1421.70px;top:386.93px;font-size:12.6px;color:#f3fcf3;letter-spacing:0.107px;-webkit-text-stroke:0.15px #f3fcf3;">1 month, 3 days, 10 hours, 58 minutes</span>
<div style="left:1738.00px;top:381.00px;width:70.00px;height:22.00px;background:#238a4e;border-radius:6px"></div>
<span class="t" style="left:1742.00px;top:386.93px;font-size:12.6px;color:#f3fcf3;letter-spacing:0.205px;-webkit-text-stroke:0.15px #f3fcf3;">reload at 0</span>
<div style="left:1854.20px;top:381.00px;width:31.80px;height:22.00px;background:#238a4e;border-radius:6px"></div>
<span class="t" style="left:1858.40px;top:386.93px;font-size:12.6px;color:#f3fcf3;letter-spacing:-0.200px;-webkit-text-stroke:0.15px #f3fcf3;transform:scaleX(0.9695);transform-origin:0 0;">1.62</span>
<div style="left:259.00px;top:278.00px;width:55.70px;height:33.70px;border:2px solid #d20f3a;box-sizing:border-box"></div>
<div style="left:261.00px;top:280.00px;width:51.70px;height:29.70px;border:1px solid #3b4a8c;border-left-width:2px;box-sizing:border-box"></div>
<div style="left:228.00px;top:494.00px;width:1692.00px;height:7.70px;background:#eceef5"></div>
<div style="left:228.00px;top:494.00px;width:13.00px;height:7.70px;background:linear-gradient(90deg,#e6e8ee,#eceef5)"></div>
<div style="left:351.30px;top:495.00px;width:1568.70px;height:6.70px;background:#e9ebf3"></div>
<div style="left:238.20px;top:457.00px;width:113.30px;height:45.00px;background:#fff;border-top:3px solid #5b6b8b;border-left:1px solid #e3e3e3;border-right:1px solid #e3e3e3;border-radius:5px 5px 0 0;box-sizing:border-box"></div>
<span class="t" style="left:254.10px;top:475.43px;font-size:12.6px;color:#444;letter-spacing:-0.135px;-webkit-text-stroke:0.15px #444;">L39H136</span>
<svg style="left:323.3px;top:474.5px;" width="10" height="10" viewBox="0 0 10 10"><path d="M1.5 1.5 L8.5 8.5 M8.5 1.5 L1.5 8.5" stroke="#3b4a8c" stroke-width="1.15"/></svg>
<div style="left:228.00px;top:501.70px;width:1690.00px;height:40.30px;background:#fff;border-bottom:1px solid #dcdcdc;box-sizing:border-box"></div>
<div style="left:1918.00px;top:501.70px;width:2.00px;height:40.30px;background:#ececec"></div>
<div style="left:1912.00px;top:542.00px;width:8.00px;height:158.00px;background:#f1f1f1"></div>
<svg style="left:242px;top:516px;" width="10" height="14" viewBox="0 0 10 14"><path d="M8 1.5 L2.5 7 L8 12.5" fill="none" stroke="#8a8a8a" stroke-width="1.4"/></svg>
<span class="t" style="left:276.30px;top:516.80px;font-size:13px;color:#4a4a4a;letter-spacing:0.010px;-webkit-text-stroke:0.15px #4a4a4a;">Detail</span>
<span class="t" style="left:348.80px;top:516.80px;font-size:13px;color:#4a4a4a;letter-spacing:0.200px;-webkit-text-stroke:0.15px #4a4a4a;transform:scaleX(1.0138);transform-origin:0 0;">Attributes</span>
<span class="t" style="left:446.00px;top:516.80px;font-size:13px;color:#4a4a4a;letter-spacing:-0.209px;-webkit-text-stroke:0.15px #4a4a4a;">Juniper SRX Cluster</span>
<span class="t" style="left:599.00px;top:516.80px;font-size:13px;color:#4a4a4a;letter-spacing:-0.009px;-webkit-text-stroke:0.15px #4a4a4a;">Interfaces</span>
<span class="t" style="left:695.60px;top:516.80px;font-size:13px;color:#4a4a4a;letter-spacing:-0.215px;-webkit-text-stroke:0.15px #4a4a4a;">Routes</span>
<span class="t" style="left:775.00px;top:516.80px;font-size:13px;color:#4a4a4a;letter-spacing:-0.200px;-webkit-text-stroke:0.15px #4a4a4a;transform:scaleX(0.9882);transform-origin:0 0;">Managed IP</span>
<span class="t" style="left:882.00px;top:516.80px;font-size:13px;color:#4a4a4a;letter-spacing:-0.200px;-webkit-text-stroke:0.15px #4a4a4a;transform:scaleX(0.8917);transform-origin:0 0;">ARP</span>
<span class="t" style="left:944.70px;top:516.80px;font-size:13px;color:#4a4a4a;letter-spacing:-0.200px;-webkit-text-stroke:0.15px #4a4a4a;transform:scaleX(0.8731);transform-origin:0 0;">MAC</span>
<span class="t" style="left:1008.80px;top:516.80px;font-size:13px;color:#4a4a4a;letter-spacing:-0.236px;-webkit-text-stroke:0.15px #4a4a4a;">XDP Neighbors</span>
<span class="t" style="left:1134.50px;top:516.80px;font-size:13px;color:#4a4a4a;letter-spacing:-0.200px;-webkit-text-stroke:0.15px #4a4a4a;transform:scaleX(0.9405);transform-origin:0 0;">QoS</span>
<span class="t" style="left:1197.80px;top:516.80px;font-size:13px;color:#4a4a4a;letter-spacing:0.001px;-webkit-text-stroke:0.15px #4a4a4a;">Port Channel</span>
<span class="t" style="left:1313.00px;top:516.80px;font-size:13px;color:#4a4a4a;letter-spacing:-0.166px;-webkit-text-stroke:0.15px #4a4a4a;">Hosts</span>
<span class="t" style="left:1384.80px;top:516.80px;font-size:13px;color:#4a4a4a;letter-spacing:-0.200px;-webkit-text-stroke:0.15px #4a4a4a;transform:scaleX(0.9194);transform-origin:0 0;">FHRP</span>
<span class="t" style="left:1456.00px;top:516.80px;font-size:13px;color:#4a4a4a;letter-spacing:-0.054px;-webkit-text-stroke:0.15px #4a4a4a;">MPLS forwarding</span>
<div style="left:260.00px;top:538.00px;width:67.70px;height:3.80px;background:#5b6e94;border-radius:3px 3px 0 0"></div>
<div style="left:1595.00px;top:520.00px;width:1.40px;height:8.00px;background:#555"></div>
<svg style="left:1604px;top:515px;" width="12" height="16" viewBox="0 0 12 16"><path d="M3 2 L9 8 L3 14" fill="none" stroke="#2a2a2a" stroke-width="1.7"/></svg>
<svg style="left:1628px;top:513px;" width="17" height="17" viewBox="0 0 17 17"><path d="M3 14 L3.5 10.5 L12 2 Q13.2 1 14.5 2.3 Q15.7 3.6 14.7 4.8 L6.3 13.3 Z" fill="none" stroke="#2f3a7a" stroke-width="1.6" stroke-linejoin="round"/><path d="M11 3.2 L13.6 5.8" stroke="#2f3a7a" stroke-width="1.4"/></svg>
<div style="left:1660.80px;top:509.00px;width:1.00px;height:25.60px;background:#e0e0e0"></div>
<svg style="left:1680px;top:515px;" width="12" height="13" viewBox="0 0 12 13"><path d="M4.2 0.8 V3.5 M8.4 0.8 V3.5 M1.9 4.3 H10.5" stroke="#396bb3" stroke-width="1.2"/><path d="M2.7 4.3 V6.2 Q2.7 10.2 6.2 10.2 Q9.7 10.2 9.7 6.2 V4.3 M6.2 10.2 V12" fill="none" stroke="#396bb3" stroke-width="1.3"/></svg>
<span class="t" style="left:1698.30px;top:515.71px;font-size:11.8px;color:#396bb3;letter-spacing:-0.179px;-webkit-text-stroke:0.4px #396bb3;">Connect</span>
<svg style="left:1762px;top:514px;" width="12" height="14" viewBox="0 0 12 14"><path d="M1.5 1 H7.5 L10.5 4 V13 H1.5 Z" fill="none" stroke="#396bb3" stroke-width="1.2" stroke-linejoin="round"/><path d="M4 7.5 H8 M4 10 H8" stroke="#396bb3" stroke-width="1.1"/></svg>
<span class="t" style="left:1781.40px;top:515.71px;font-size:11.8px;color:#396bb3;letter-spacing:-0.181px;-webkit-text-stroke:0.4px #396bb3;">Log file</span>
<svg style="left:1836px;top:514px;" width="12" height="14" viewBox="0 0 12 14"><path d="M1.5 1 H7.5 L10.5 4 V13 H1.5 Z" fill="none" stroke="#396bb3" stroke-width="1.2" stroke-linejoin="round"/><path d="M6 5.5 V10.5 M4 8.5 L6 10.5 L8 8.5" fill="none" stroke="#396bb3" stroke-width="1.1"/></svg>
<span class="t" style="left:1854.70px;top:515.71px;font-size:11.8px;color:#396bb3;letter-spacing:-0.200px;-webkit-text-stroke:0.4px #396bb3;transform:scaleX(0.9681);transform-origin:0 0;">JSON file</span>
<div style="left:1824.40px;top:506.30px;width:82.10px;height:30.30px;border:2px solid #d20f3a;box-sizing:border-box"></div>
<div style="left:228.00px;top:542.00px;width:1684.00px;height:9.00px;background:#f1f1f1"></div>
<div style="left:228.00px;top:551.00px;width:8.20px;height:149.00px;background:#f1f1f1"></div>
<div style="left:236.20px;top:551.00px;width:1675.80px;height:149.00px;background:#fff"></div>
<div style="left:236.20px;top:586.50px;width:1675.80px;height:1.00px;background:#ececec"></div>
<div style="left:236.20px;top:623.50px;width:1675.80px;height:1.00px;background:#ececec"></div>
<div style="left:236.20px;top:660.80px;width:1675.80px;height:1.00px;background:#ececec"></div>
<div style="left:236.20px;top:697.70px;width:1675.80px;height:1.00px;background:#ececec"></div>
<div style="left:382.10px;top:551.00px;width:1.00px;height:149.00px;background:#ececec"></div>
<span class="t" style="left:245.20px;top:562.63px;font-size:13.2px;color:#444;letter-spacing:0.200px;-webkit-text-stroke:0.15px #444;transform:scaleX(1.0119);transform-origin:0 0;">Hostname</span>
<span class="t" style="left:391.20px;top:562.63px;font-size:13.2px;color:#444;letter-spacing:-0.200px;-webkit-text-stroke:0.15px #444;transform:scaleX(0.9544);transform-origin:0 0;">L39H136</span>
<span class="t" style="left:245.20px;top:599.63px;font-size:13.2px;color:#444;letter-spacing:0.063px;-webkit-text-stroke:0.15px #444;">Site</span>
<span class="t" style="left:391.20px;top:599.63px;font-size:13.2px;color:#444;letter-spacing:-0.200px;-webkit-text-stroke:0.15px #444;transform:scaleX(0.9335);transform-origin:0 0;">L39</span>
<span class="t" style="left:245.20px;top:636.63px;font-size:13.2px;color:#444;letter-spacing:0.110px;-webkit-text-stroke:0.15px #444;">Routing domain</span>
<span class="t" style="left:245.20px;top:673.63px;font-size:13.2px;color:#444;letter-spacing:0.034px;-webkit-text-stroke:0.15px #444;">Switching domain</span>
</body></html>
